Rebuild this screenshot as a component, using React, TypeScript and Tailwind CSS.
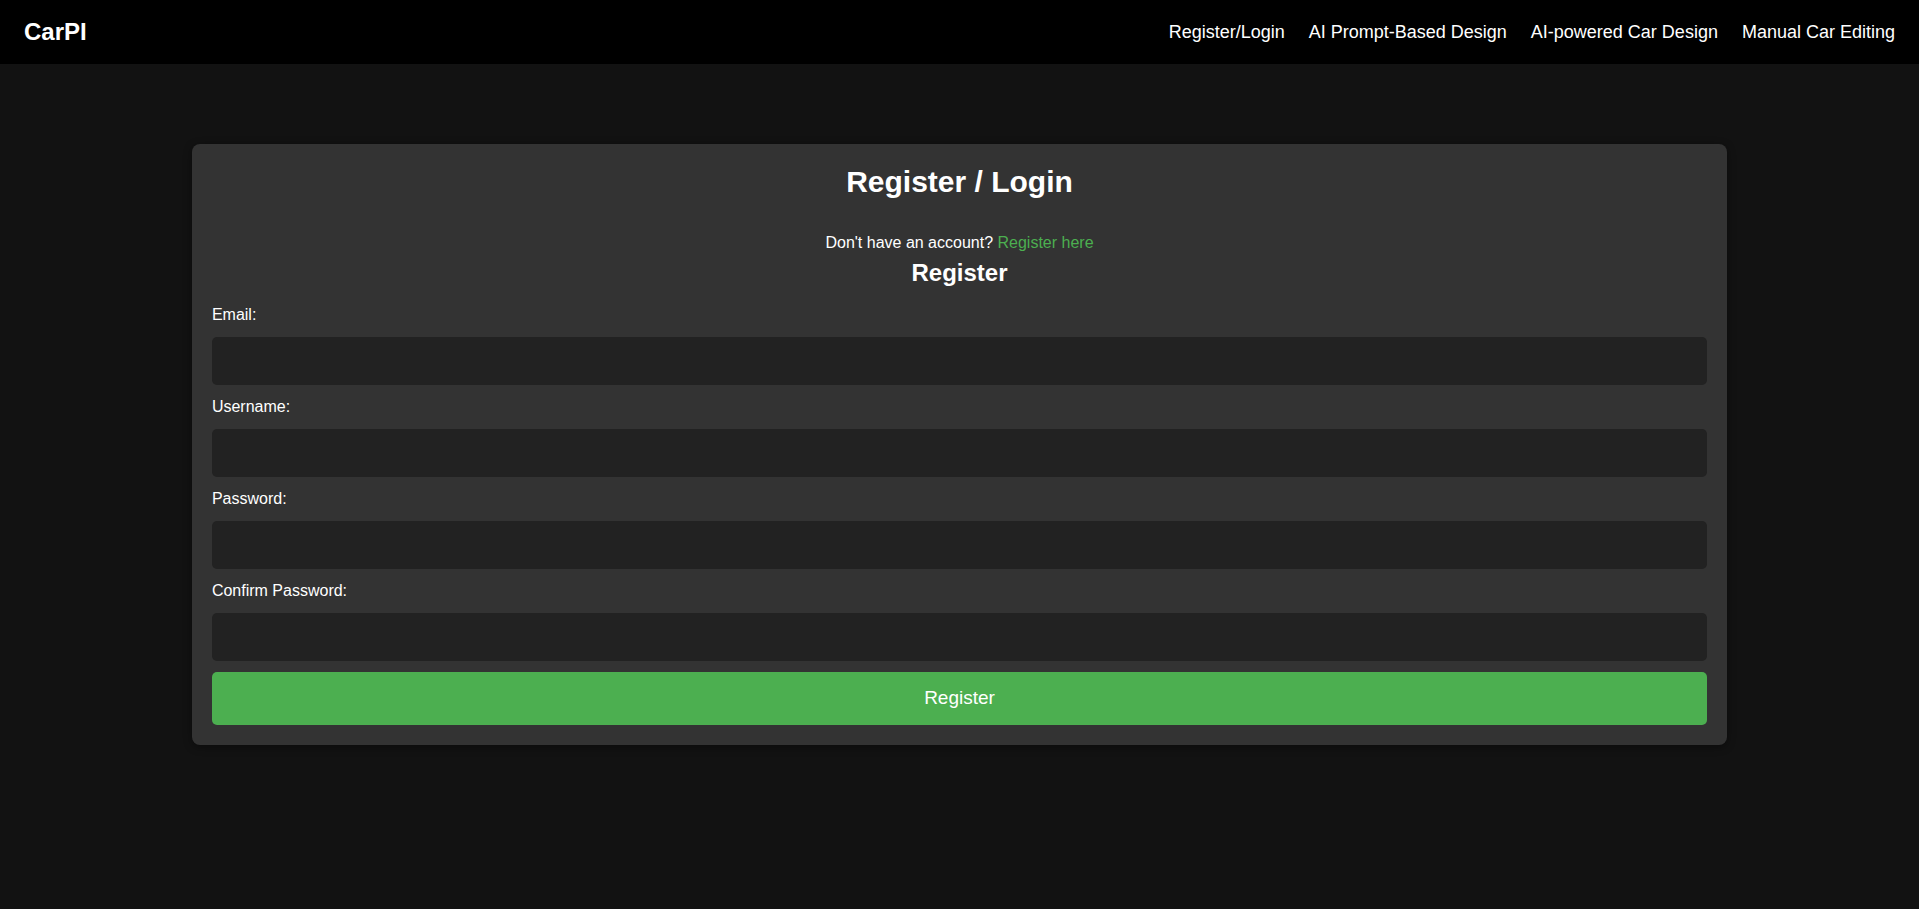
export default function App() {
  return (
    <div
      className="min-h-screen bg-[#121212] text-white"
      style={{ fontFamily: '"Liberation Sans", Arial, sans-serif' }}
    >
      <Navbar />

      <main className="pt-[80px]">
        {/* Auth card */}
        <div className="w-[80%] mx-auto bg-[#333333] rounded-lg px-5 pt-5 pb-5 shadow-[0_2px_8px_rgba(0,0,0,0.4)]">
          <h1 className="text-center text-[30px] leading-[35px] font-bold">Register / Login</h1>

          <p className="mt-[35px] text-center text-[16px] leading-[18px]">
            Don't have an account? <a className="text-[#4caf50] cursor-pointer">Register here</a>
          </p>

          <h2 className="mt-[7px] text-center text-[24px] leading-[28px] font-bold">Register</h2>

          <form className="mt-[19px]" onSubmit={(e) => e.preventDefault()}>
            <Field label="Email:" type="email" first />
            <Field label="Username:" type="text" />
            <Field label="Password:" type="password" />
            <Field label="Confirm Password:" type="password" />

            <button
              type="submit"
              className="mt-[11px] w-full h-[53px] rounded-[5px] bg-[#4caf50] text-white text-[19px]"
            >
              Register
            </button>
          </form>
        </div>
      </main>
    </div>
  );
}

/* ---------------- Components ---------------- */

function Navbar() {
  return (
    <nav className="h-16 bg-black flex items-center justify-between pl-6 pr-6">
      <div className="text-[24px] font-bold">CarPI</div>
      <ul className="flex gap-[24px] text-[18px]">
        <li><a className="cursor-pointer">Register/Login</a></li>
        <li><a className="cursor-pointer">AI Prompt-Based Design</a></li>
        <li><a className="cursor-pointer">AI-powered Car Design</a></li>
        <li><a className="cursor-pointer">Manual Car Editing</a></li>
      </ul>
    </nav>
  );
}

function Field({ label, type, first }: any) {
  return (
    <div className={first ? "" : "mt-[13px]"}>
      <label className="block text-[16px] leading-[18px]">{label}</label>
      <input
        type={type}
        className="mt-[13px] block w-full h-[48px] rounded-[5px] bg-[#222222] text-white px-3 outline-none"
      />
    </div>
  );
}
